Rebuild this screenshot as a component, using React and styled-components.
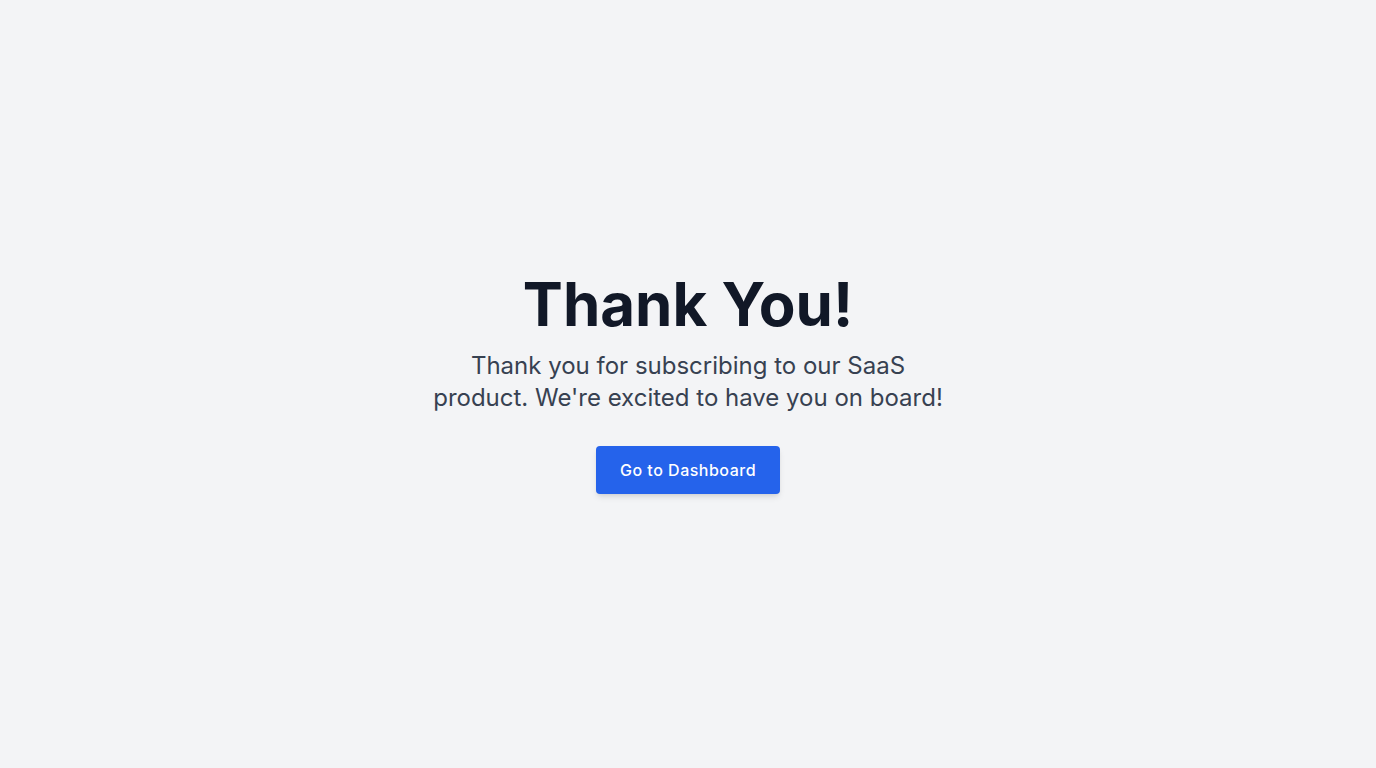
import React from "react";
import styled, { createGlobalStyle } from "styled-components";

const GlobalStyle = createGlobalStyle`
  * { box-sizing: border-box; }
  body {
    margin: 0;
    font-family: Inter, "Noto Sans", sans-serif;
    background-color: #f3f4f6;
  }
`;

const Page = styled.main`
  min-height: 100vh;
  display: flex;
  align-items: center;
  justify-content: center;
  background-color: #f3f4f6;
`;

const Content = styled.div`
  display: flex;
  flex-direction: column;
  align-items: center;
  text-align: center;
  max-width: 512px;
`;

const Title = styled.h1`
  margin: 0 0 16px;
  font-size: 60px;
  line-height: 60px;
  font-weight: 700;
  color: #111827;
`;

const Message = styled.p`
  margin: 0 0 32px;
  font-size: 24px;
  line-height: 32px;
  color: #374151;
`;

const Button = styled.button`
  border: none;
  border-radius: 4px;
  background-color: #2563eb;
  color: #ffffff;
  font-family: inherit;
  font-size: 16px;
  font-weight: 500;
  letter-spacing: 0.5px;
  padding: 12px 24px;
  line-height: 24px;
  box-shadow: 0 4px 6px -1px rgba(0, 0, 0, 0.1), 0 2px 4px -2px rgba(0, 0, 0, 0.1);
  cursor: pointer;
`;

function App() {
  return (
    <>
      <GlobalStyle />
      <Page>
        <Content>
          <Title>Thank You!</Title>
          <Message>
            Thank you for subscribing to our SaaS product. We're excited to have
            you on board!
          </Message>
          <Button>Go to Dashboard</Button>
        </Content>
      </Page>
    </>
  );
}

export default App;
